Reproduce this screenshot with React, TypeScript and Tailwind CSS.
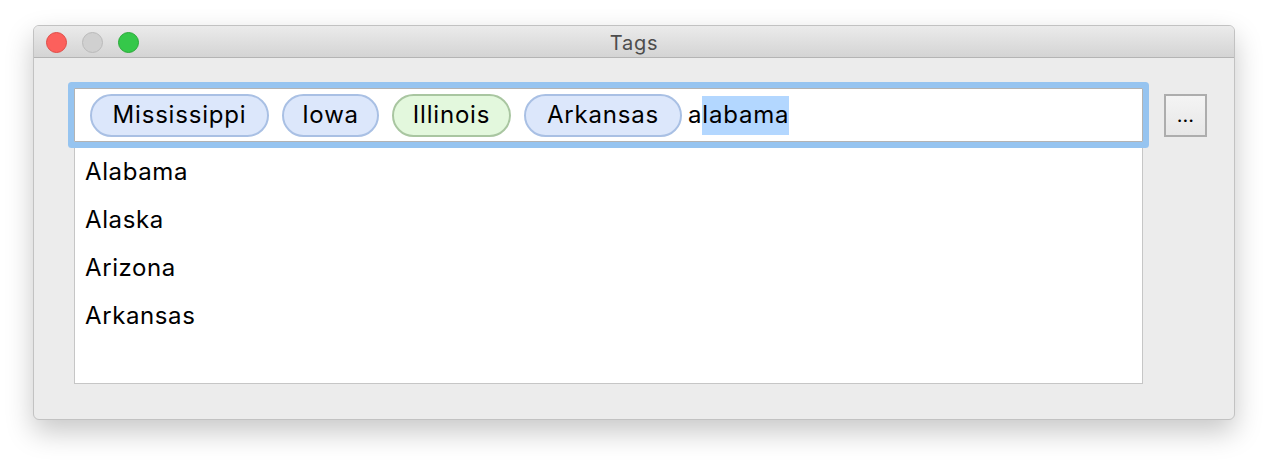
import React from "react";

const font = { fontFamily: "Inter, 'Noto Sans', sans-serif" };

function Pill({ label, w, green }: { label: string; w: string; green?: boolean }) {
  return (
    <div
      className={
        "h-[43px] rounded-full border-2 flex items-center justify-center shrink-0 text-[24px] tracking-[0.8px] text-black " +
        w +
        (green ? " bg-[#e3f8dd] border-[#a9c6a1]" : " bg-[#dce7fb] border-[#a9c0e4]")
      }
    >
      {label}
    </div>
  );
}

export default function App() {
  const items = ["Alabama", "Alaska", "Arizona", "Arkansas"];
  return (
    <div className="w-[1268px] h-[462px] bg-white pt-[25px] pl-[33px]" style={font}>
      <div className="w-[1202px] h-[395px] bg-[#ececec] rounded-[6px] border border-[#c2c2c2] shadow-[0_12px_28px_rgba(0,0,0,0.22)] flex flex-col overflow-hidden">
        <div className="h-[32px] shrink-0 grid grid-cols-[1fr_auto_1fr] items-center border-b border-[#b4b4b4] bg-gradient-to-b from-[#ebebeb] to-[#d4d4d4]">
          <div className="flex items-center gap-[15px] pl-[12px] pt-[1px]">
            <div className="w-[21px] h-[21px] rounded-full bg-[#fc605c] border border-[#df4b46]" />
            <div className="w-[21px] h-[21px] rounded-full bg-[#d0d0d0] border border-[#bababa]" />
            <div className="w-[21px] h-[21px] rounded-full bg-[#35c84a] border border-[#29a938]" />
          </div>
          <div className="text-[20px] tracking-[0.7px] text-[#4d4d4d] pt-[2px]">Tags</div>
          <div />
        </div>
        <div className="flex items-start pt-[30px] pl-[40px]">
          <div className="flex flex-col w-[1069px]">
            <div className="relative z-10 h-[54px] bg-white border border-[#b3b3b3] shadow-[0_0_0_6px_#96c4f0] rounded-[1px] flex items-center pl-[15px]">
              <div className="flex items-center gap-[13px]">
                <Pill label="Mississippi" w="w-[179px]" />
                <Pill label="Iowa" w="w-[97px]" />
                <Pill label="Illinois" w="w-[119px]" green />
                <Pill label="Arkansas" w="w-[158px]" />
              </div>
              <div className="ml-[6px] flex items-center text-[24px] tracking-[0.8px] text-black h-[39px]">
                <span>a</span>
                <span className="bg-[#b3d7ff] h-[39px] flex items-center">labama</span>
              </div>
            </div>
            <div className="h-[242px] bg-white border border-[#c6c6c6] pt-[5px] pl-[10px]">
              {items.map((it) => (
                <div key={it} className="h-[48px] flex items-center text-[24px] tracking-[0.6px] text-black">
                  {it}
                </div>
              ))}
            </div>
          </div>
          <div className="ml-[21px] mt-[6px] w-[43px] h-[43px] border-2 border-[#adadad] bg-gradient-to-b from-[#f4f4f4] to-[#e7e7e7] flex items-center justify-center text-[20px] text-black leading-none pb-[2px]">
            ...
          </div>
        </div>
      </div>
    </div>
  );
}
